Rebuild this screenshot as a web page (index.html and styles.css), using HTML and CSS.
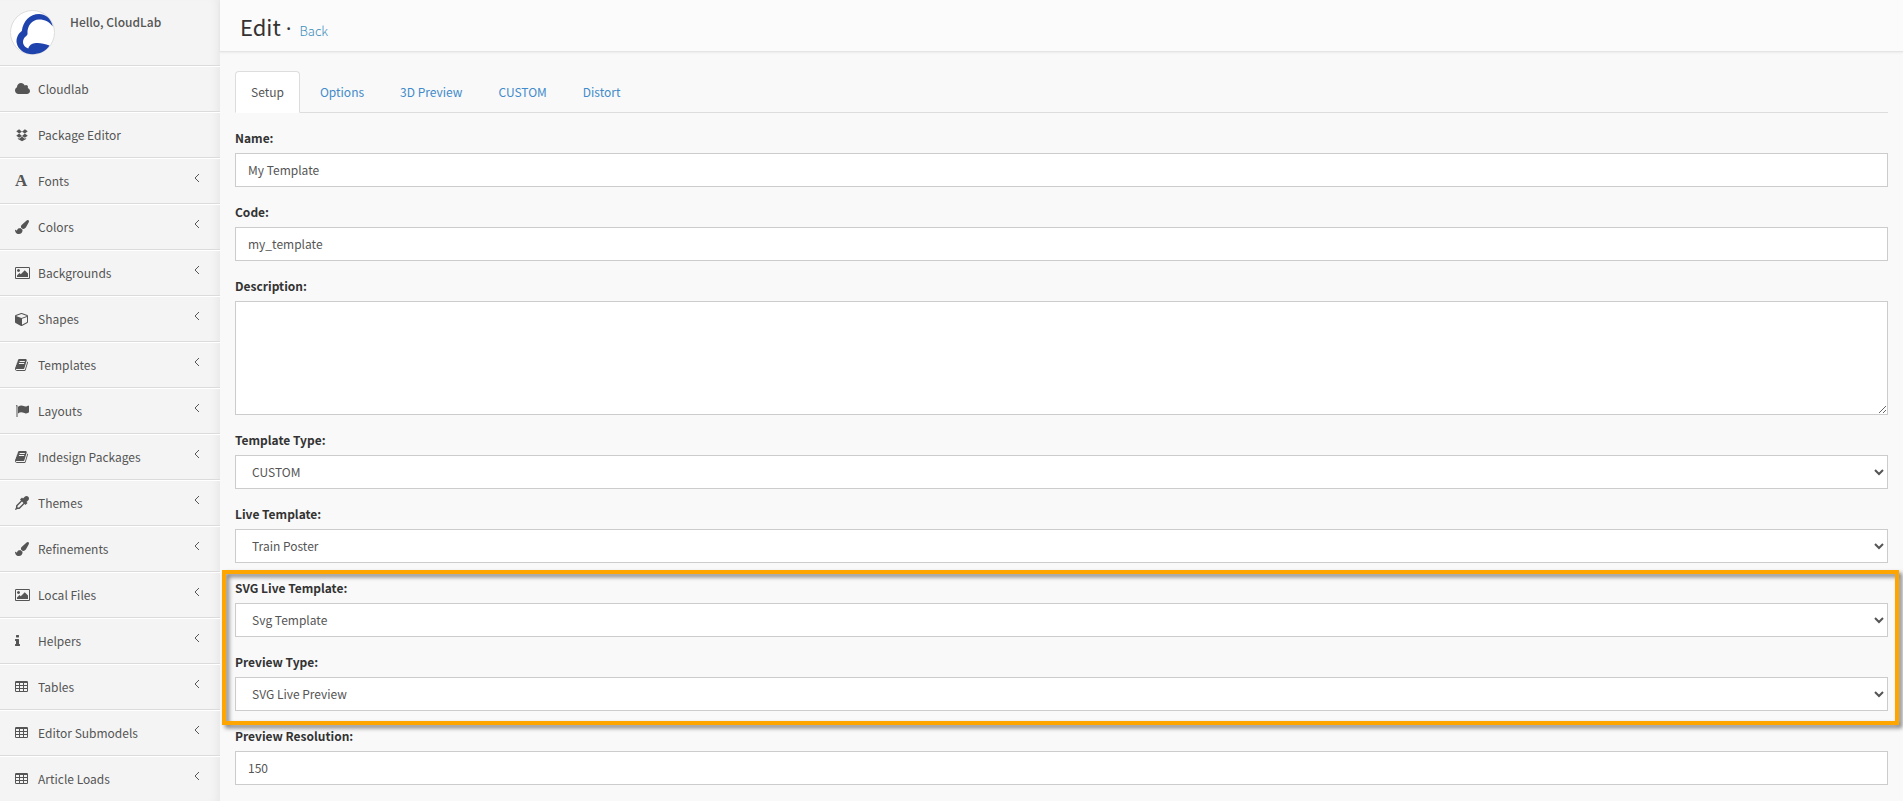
FILE: index.html
```
<!DOCTYPE html>
<html lang="en">
<head>
  <meta charset="UTF-8" />
  <title>Edit template</title>
  <meta name="viewport" content="width=device-width, initial-scale=1.0" />
  <link rel="stylesheet" href="styles.css">
</head>
<body>
  <svg class="sprite" aria-hidden="true">
    <symbol id="cloud" viewBox="64 0 1920 1792"><path d="M1984 1152q0 159-112.500 271.500t-271.500 112.500h-1088q-185 0-316.500-131.500t-131.500-316.500q0-132 71-241.500t187-163.500q-2-28-2-43 0-212 150-362t362-150q158 0 286.500 88t187.500 230q70-62 166-62 106 0 181 75t75 181q0 75-41 138 129 30 213 134.500t84 239.500z"/></symbol>
    <symbol id="dropbox" viewBox="0 0 1792 1792"><path d="M528 170L896 477 528 704 160 409zM1264 170L896 477l368 227 368-295zM528 704L896 1010l-368 240L160 999zM1264 704L896 1010l368 240 368-251zM896 1076l368 306 158-103v116L896 1710 370 1395v-116l158 103z"/></symbol>
    <symbol id="brush" viewBox="0 0 1792 1792"><path d="M1615 0q70 0 122.500 46.500t52.500 116.500q0 63-45 151-332 629-465 752-97 91-218 91-126 0-216.500-92.500t-90.500-219.500q0-128 92-212l638-579q59-54 130-54zm-909 1034q39 76 106.500 130t150.500 76l1 71q4 213-129.500 347t-348.500 134q-123 0-218-46.500t-152.500-127.500-86.500-183-29-220q7 5 41 30t62 44.500 59 36.500 46 17q41 0 55-37 25-66 57.500-112.500t69.500-76 88-47.500 103-25.500 125-10.500z"/></symbol>
    <symbol id="picture" viewBox="-64 0 1920 1792"><path d="M576 576q0 80-56 136t-136 56-136-56-56-136 56-136 136-56 136 56 56 136zm1024 384v448h-1408v-192l320-320 160 160 512-512zm96-704h-1600q-13 0-22.500 9.500t-9.500 22.500v1216q0 13 9.500 22.500t22.500 9.500h1600q13 0 22.500-9.500t9.500-22.500v-1216q0-13-9.500-22.500t-22.500-9.500zm160 32v1216q0 66-47 113t-113 47h-1600q-66 0-113-47t-47-113v-1216q0-66 47-113t113-47h1600q66 0 113 47t47 113z"/></symbol>
    <symbol id="cube" viewBox="0 0 1792 1792"><path d="M896 1629l640-349v-636l-640 233v752zm-64-865l698-254-698-254-698 254zm832-252v768q0 35-18 65t-49 47l-704 384q-28 16-61 16t-61-16l-704-384q-31-17-49-47t-18-65v-768q0-40 23-73t61-47l704-256q22-8 44-8t44 8l704 256q38 14 61 47t23 73z"/></symbol>
    <symbol id="book" viewBox="0 0 1792 1792"><path d="M1639 478q40 57 18 129l-275 906q-19 64-76.500 107.500t-122.500 43.500h-923q-77 0-148.500-53.500t-99.500-131.500q-24-67-2-127 0-4 3-27t4-37q1-8-3-21.500t-3-19.500q2-11 8-21t16.500-23.500 16.500-23.500q23-38 45-91.500t30-91.500q3-10 .5-30t-.5-28q3-11 17-28t17-23q21-36 42-92t25-90q1-9-2.500-32t.5-28q4-13 22-30.500t22-22.500q19-26 42.500-84.500t27.500-96.500q1-8-3-25.500t-2-26.500q2-8 9-18t18-23 17-21q8-12 16.500-30.500t15-35 16-36 19.500-32 26.500-23.500 36-11.500 47.500 5.500l-1 3q38-9 51-9h761q74 0 114 56t18 130l-274 906q-36 119-71.500 153.500t-128.500 34.500h-869q-27 0-38 15-11 16-1 43 24 70 144 70h923q29 0 56-15.500t35-41.500l300-987q7-22 5-57 38 15 59 43zm-1064 2q-4 13 2 22.500t20 9.500h608q13 0 25.500-9.500t16.500-22.500l21-64q4-13-2-22.500t-20-9.500h-608q-13 0-25.500 9.500t-16.500 22.500zm-83 256q-4 13 2 22.500t20 9.500h608q13 0 25.500-9.500t16.500-22.500l21-64q4-13-2-22.500t-20-9.500h-608q-13 0-25.500 9.500t-16.500 22.500z"/></symbol>
    <symbol id="flag" viewBox="0 0 1792 1792"><path d="M128 200a100 100 0 0 1 192 0v1464H192V330q-64-50-64-130zM384 350q240-150 440-150c240 0 340 130 520 130 150 0 300-100 390-130q58 0 58 60v760q0 40-40 60-220 120-390 120c-220 0-310-130-560-130-150 0-280 60-418 140z"/></symbol>
    <symbol id="dropper" viewBox="0 0 1792 1792"><path d="M1698 94q94 94 94 226.500T1697 546l-225 223 104 104q10 10 10 23t-10 23l-210 210q-10 10-23 10t-23-10l-105-105-603 603q-37 37-90 37H320l-256 128-64-64 128-256v-202q0-53 37-90l603-603-105-105q-10-10-10-23t10-23l210-210q10-10 23-10t23 10l104 104 223-225Q1339 0 1472 0t226 94zM512 1472l576-576-192-192-576 576v192z"/></symbol>
    <symbol id="info" viewBox="0 0 1792 1792"><path d="M640 1344v128q0 26-19 45t-45 19h-512q-26 0-45-19t-19-45v-128q0-26 19-45t45-19h64v-384h-64q-26 0-45-19t-19-45v-128q0-26 19-45t45-19h384q26 0 45 19t19 45v576h64q26 0 45 19t19 45zm-128-1152v192q0 26-19 45t-45 19h-256q-26 0-45-19t-19-45v-192q0-26 19-45t45-19h256q26 0 45 19t19 45z"/></symbol>
    <symbol id="table" viewBox="0 0 1792 1792"><path fill-rule="evenodd" d="M160 128h1344q160 0 160 160v1088q0 160-160 160H160Q0 1536 0 1376V288q0-160 160-160zM128 384v256h384V384zm512 0v256h384V384zm512 0v256h384V384zM128 768v256h384V768zm512 0v256h384V768zm512 0v256h384V768zM128 1152v256h384v-256zm512 0v256h384v-256zm512 0v256h384v-256z"/></symbol>
    <symbol id="angle" viewBox="0 0 6 10"><path d="M5 1L1 5l4 4" fill="none" stroke="currentColor"/></symbol>
  </svg>

  <div class="wrapper">
    <aside class="sidebar">
      <div class="user-panel">
        <svg class="avatar" viewBox="0 0 45 45" role="img" aria-label="CloudLab">
          <circle cx="22.500" cy="22.500" r="22" fill="#fff" stroke="#ddd"/>
          <path d="M42.800 16.500C41 8 35 4 29 4C20 4 13 11 11.800 21C7.500 24 6 29 6.700 33C8 40 15 44.200 22.500 44.200C29.500 44.200 36 41 39.500 35.500C33 33 26 32 22 34C20 35 18.800 36.500 18.300 38.500C14 37 12 33 13.500 29.500C14.500 26.500 18 25.500 17.500 23.500C17 16 22 9.500 29 9.500C35 9.500 39.500 12 42.800 16.500Z" fill="#1f43ad"/>
        </svg>
        <p>Hello, CloudLab</p>
      </div>
      <ul class="menu">
        <li><a href="#"><svg class="icon wide"><use href="#cloud"/></svg><span>Cloudlab</span></a></li>
        <li><a href="#"><svg class="icon"><use href="#dropbox"/></svg><span>Package Editor</span></a></li>
        <li><a href="#"><b class="icon letter">A</b><span>Fonts</span><svg class="angle"><use href="#angle"/></svg></a></li>
        <li><a href="#"><svg class="icon"><use href="#brush"/></svg><span>Colors</span><svg class="angle"><use href="#angle"/></svg></a></li>
        <li><a href="#"><svg class="icon wide"><use href="#picture"/></svg><span>Backgrounds</span><svg class="angle"><use href="#angle"/></svg></a></li>
        <li><a href="#"><svg class="icon"><use href="#cube"/></svg><span>Shapes</span><svg class="angle"><use href="#angle"/></svg></a></li>
        <li><a href="#"><svg class="icon"><use href="#book"/></svg><span>Templates</span><svg class="angle"><use href="#angle"/></svg></a></li>
        <li><a href="#"><svg class="icon"><use href="#flag"/></svg><span>Layouts</span><svg class="angle"><use href="#angle"/></svg></a></li>
        <li><a href="#"><svg class="icon"><use href="#book"/></svg><span>Indesign Packages</span><svg class="angle"><use href="#angle"/></svg></a></li>
        <li><a href="#"><svg class="icon"><use href="#dropper"/></svg><span>Themes</span><svg class="angle"><use href="#angle"/></svg></a></li>
        <li><a href="#"><svg class="icon"><use href="#brush"/></svg><span>Refinements</span><svg class="angle"><use href="#angle"/></svg></a></li>
        <li><a href="#"><svg class="icon wide"><use href="#picture"/></svg><span>Local Files</span><svg class="angle"><use href="#angle"/></svg></a></li>
        <li><a href="#"><svg class="icon"><use href="#info"/></svg><span>Helpers</span><svg class="angle"><use href="#angle"/></svg></a></li>
        <li><a href="#"><svg class="icon"><use href="#table"/></svg><span>Tables</span><svg class="angle"><use href="#angle"/></svg></a></li>
        <li><a href="#"><svg class="icon"><use href="#table"/></svg><span>Editor Submodels</span><svg class="angle"><use href="#angle"/></svg></a></li>
        <li><a href="#"><svg class="icon"><use href="#table"/></svg><span>Article Loads</span><svg class="angle"><use href="#angle"/></svg></a></li>
      </ul>
    </aside>

    <main class="main">
      <header class="content-header">
        <h1>Edit <span class="dot">·</span></h1>
        <a href="#">Back</a>
      </header>

      <div class="content">
        <nav class="tabs">
          <a class="active" href="#">Setup</a>
          <a href="#">Options</a>
          <a href="#">3D Preview</a>
          <a href="#">CUSTOM</a>
          <a href="#">Distort</a>
        </nav>

        <form>
          <div class="form-group">
            <label for="name">Name:</label>
            <input class="form-control" id="name" type="text" value="My Template" />
          </div>
          <div class="form-group">
            <label for="code">Code:</label>
            <input class="form-control" id="code" type="text" value="my_template" />
          </div>
          <div class="form-group">
            <label for="description">Description:</label>
            <textarea class="form-control" id="description"></textarea>
          </div>
          <div class="form-group">
            <label for="templateType">Template Type:</label>
            <select class="form-control" id="templateType"><option>CUSTOM</option></select>
          </div>
          <div class="form-group">
            <label for="liveTemplate">Live Template:</label>
            <select class="form-control" id="liveTemplate"><option>Train Poster</option></select>
          </div>
          <div class="highlight">
            <div class="form-group">
              <label for="svgTemplate">SVG Live Template:</label>
              <select class="form-control" id="svgTemplate"><option>Svg Template</option></select>
            </div>
            <div class="form-group">
              <label for="previewType">Preview Type:</label>
              <select class="form-control" id="previewType"><option>SVG Live Preview</option></select>
            </div>
          </div>
          <div class="form-group">
            <label for="resolution">Preview Resolution:</label>
            <input class="form-control" id="resolution" type="text" value="150" />
          </div>
        </form>
      </div>
    </main>
  </div>
</body>
</html>
```

FILE: styles.css
```
* {
  box-sizing: border-box;
}

body {
  margin: 0;
  font-family: "Source Sans Pro", "Noto Sans CJK SC", sans-serif;
  font-size: 12px;
  line-height: 20px;
  color: #333;
  background: #f9f9f9;
}

a {
  color: #428bca;
  text-decoration: none;
}

.sprite {
  display: none;
}

.wrapper {
  display: flex;
  min-height: 100vh;
}

/* Sidebar */
.sidebar {
  flex: 0 0 220px;
  background: #f4f4f4;
  box-shadow: inset -8px 0 8px -5px rgba(0, 0, 0, 0.05);
}

.user-panel {
  display: flex;
  gap: 15px;
  padding: 10px;
  border-bottom: 1px solid #dbdbdb;
}

.user-panel p {
  margin: 2px 0 0;
  font-weight: 500;
  color: #555;
}

.avatar {
  width: 45px;
  height: 45px;
}

.menu {
  margin: 0;
  padding: 0;
  list-style: none;
}

.menu li {
  border-top: 1px solid #fff;
  border-bottom: 1px solid #dbdbdb;
}

.menu li:last-child {
  border-bottom: none;
}

.menu a {
  display: flex;
  align-items: center;
  padding: 12px 20px 12px 15px;
  color: #555;
}

.icon {
  width: 14px;
  height: 14px;
  margin-right: 9px;
  fill: currentColor;
}

.icon.wide {
  width: 15px;
  margin-right: 8px;
}

.icon.letter {
  font-family: "Liberation Serif", serif;
  font-size: 17px;
  line-height: 14px;
}

.angle {
  width: 6px;
  height: 10px;
  margin: 0 0 6px auto;
}

/* Page header */
.main {
  flex: 1;
  min-width: 0;
}

.content-header {
  display: flex;
  align-items: baseline;
  gap: 8px;
  padding: 11px 20px 8px;
  background: #fbfbfb;
  border-bottom: 1px solid #e5e5e5;
  box-shadow: 0 1px 2px rgba(0, 0, 0, 0.06);
}

.content-header h1 {
  margin: 0;
  font-size: 22px;
  font-weight: 400;
  line-height: 31px;
}

.content-header .dot {
  font-family: "Open Sans", sans-serif;
}

.content-header a {
  font-size: 13px;
  font-weight: 300;
  color: #3c8dbc;
}

.content {
  padding: 19px 15px 0;
}

.tabs {
  display: flex;
  gap: 4px;
  margin-bottom: 15px;
  border-bottom: 1px solid #ddd;
}

.tabs a {
  margin-bottom: -1px;
  padding: 10px 15px;
  border: 1px solid transparent;
  border-radius: 4px 4px 0 0;
}

.tabs .active {
  color: #555;
  background: #fff;
  border-color: #ddd #ddd #fff;
}

/* Form */
.form-group {
  margin-bottom: 15px;
}

.form-group label {
  display: block;
  margin-bottom: 5px;
  font-weight: 700;
}

.form-control {
  display: block;
  width: 100%;
  height: 34px;
  padding: 5px 12px 7px;
  border: 1px solid #ccc;
  border-radius: 0;
  background-color: #fff;
  color: #555;
  font: inherit;
}

textarea.form-control {
  height: 114px;
}

.highlight {
  position: relative;
  display: flow-root;
}

.highlight::after {
  content: "";
  position: absolute;
  inset: -8px -11px 1px -13px;
  border: 4px solid #ffa500;
  filter: drop-shadow(3px 3px 2px rgba(0, 0, 0, 0.5));
  pointer-events: none;
}
```
